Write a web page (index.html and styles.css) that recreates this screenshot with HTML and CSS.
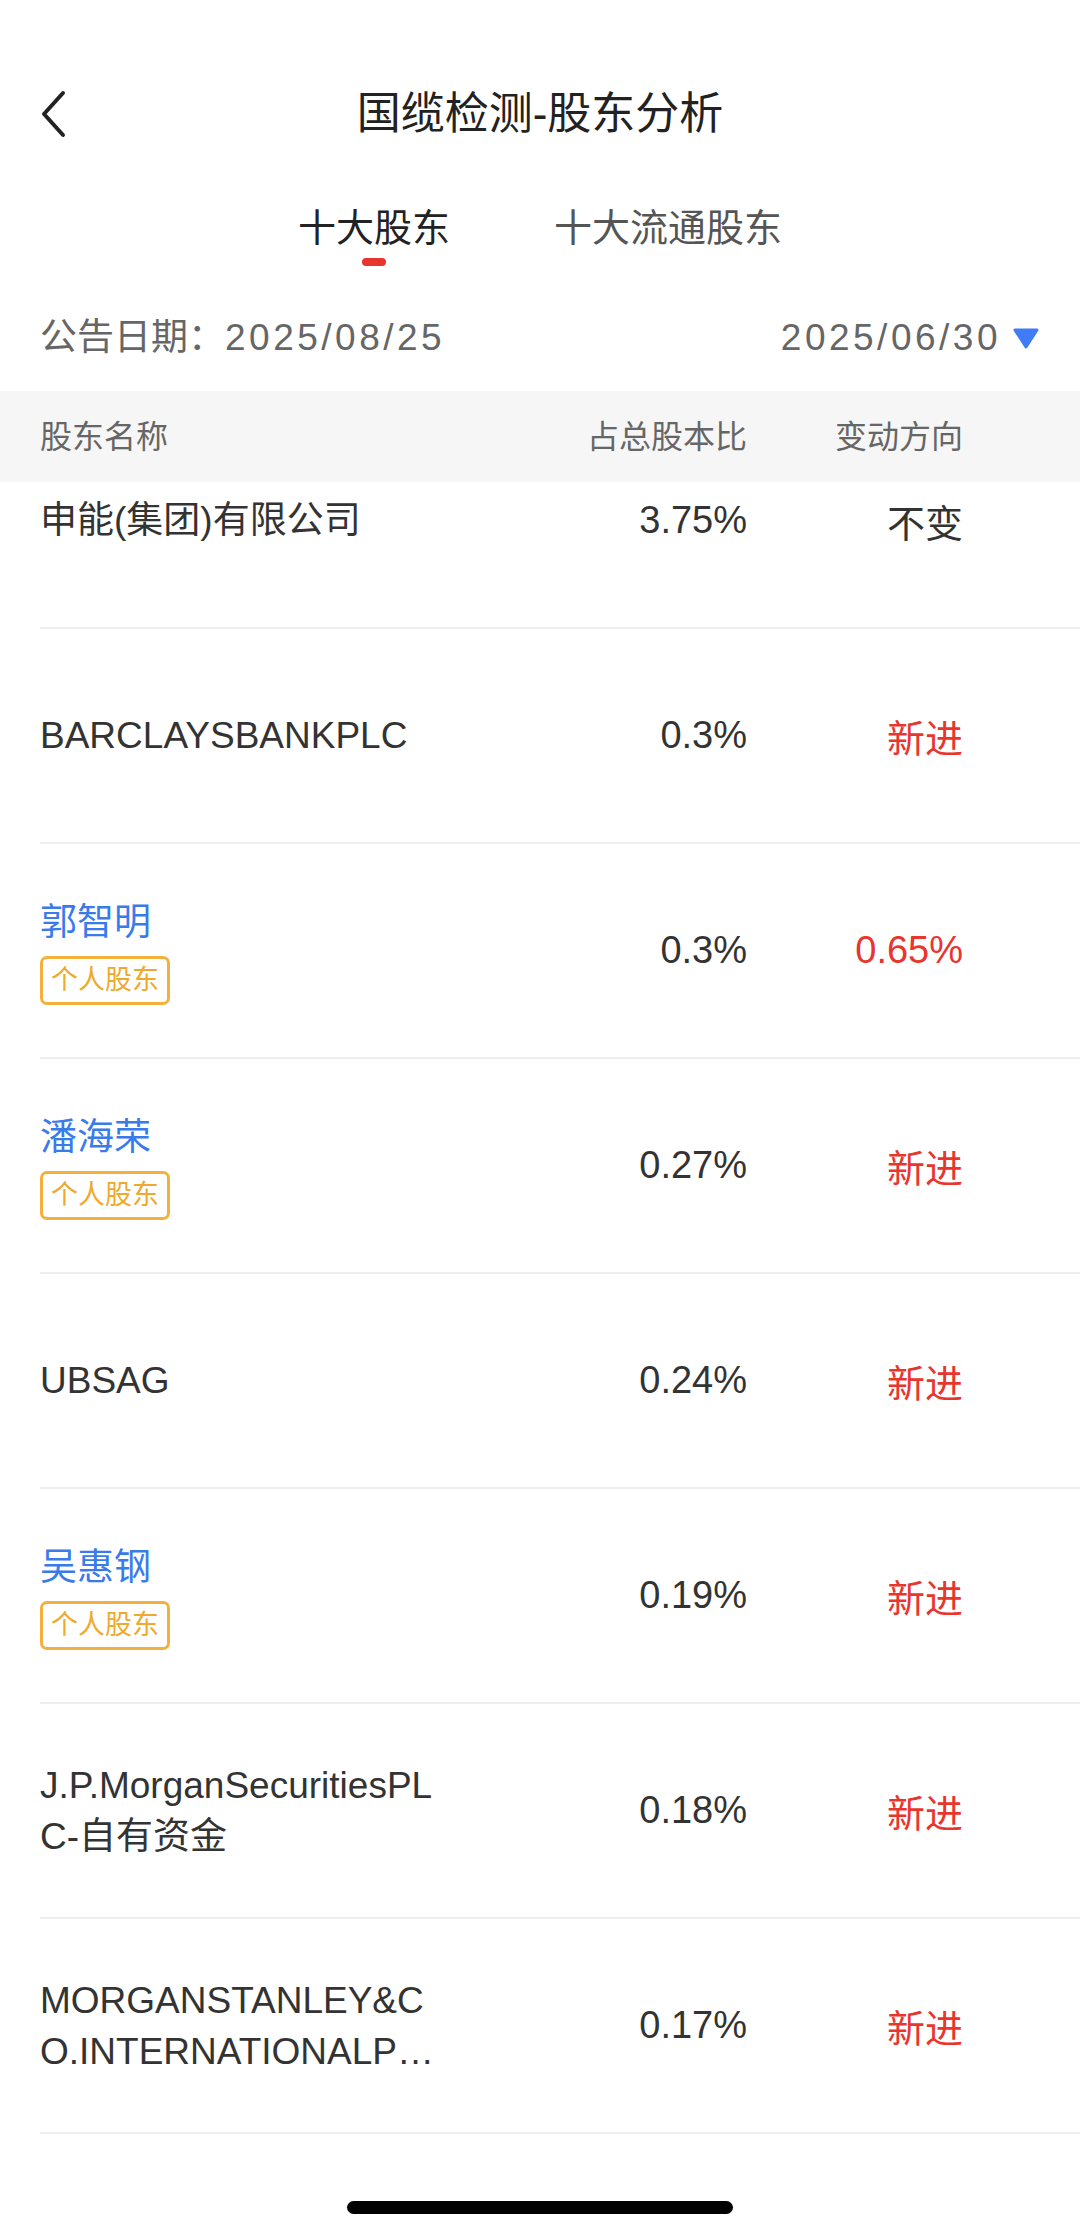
FILE: index.html
```html
<!DOCTYPE html>
<html>
<head>
    <meta charset="utf-8" />
    <title>国缆检测-股东分析</title>
    <link rel="stylesheet" href="styles.css">
</head>
<body>
    <header class="topbar">
        <a class="back">
            <svg width="26" height="50" viewBox="0 0 26 50"><polyline points="22,4 3,25 22,46" fill="none" stroke="#222" stroke-width="4" stroke-linecap="round" stroke-linejoin="round"/></svg>
        </a>
        <h1>国缆检测-股东分析</h1>
        <div></div>
    </header>

    <nav class="tabs">
        <div class="tab active">十大股东<i class="bar"></i></div>
        <div class="tab">十大流通股东</div>
    </nav>

    <div class="dates">
        <span>公告日期：<span class="num">2025/08/25</span></span>
        <span class="period">
            <span class="num">2025/06/30</span>
            <svg width="26" height="21" viewBox="0 0 26 21"><path d="M2 2 H24 L13 19 Z" fill="#3f7cf6" stroke="#3f7cf6" stroke-width="3" stroke-linejoin="round"/></svg>
        </span>
    </div>

    <div class="thead">
        <span>股东名称</span>
        <span class="c">占总股本比</span>
        <span class="c">变动方向</span>
    </div>

    <div class="viewport">
        <div class="list">
            <div class="row">
                <div class="who"><div class="name">申能(集团)有限公司</div></div>
                <div class="c">3.75%</div>
                <div class="c">不变</div>
            </div>
            <div class="row">
                <div class="who"><div class="name">BARCLAYSBANKPLC</div></div>
                <div class="c">0.3%</div>
                <div class="c up">新进</div>
            </div>
            <div class="row">
                <div class="who"><div class="name person">郭智明</div><span class="tag">个人股东</span></div>
                <div class="c">0.3%</div>
                <div class="c up">0.65%</div>
            </div>
            <div class="row">
                <div class="who"><div class="name person">潘海荣</div><span class="tag">个人股东</span></div>
                <div class="c">0.27%</div>
                <div class="c up">新进</div>
            </div>
            <div class="row">
                <div class="who"><div class="name">UBSAG</div></div>
                <div class="c">0.24%</div>
                <div class="c up">新进</div>
            </div>
            <div class="row">
                <div class="who"><div class="name person">吴惠钢</div><span class="tag">个人股东</span></div>
                <div class="c">0.19%</div>
                <div class="c up">新进</div>
            </div>
            <div class="row">
                <div class="who"><div class="name">J.P.MorganSecuritiesPLC-自有资金</div></div>
                <div class="c">0.18%</div>
                <div class="c up">新进</div>
            </div>
            <div class="row">
                <div class="who"><div class="name">MORGANSTANLEY&amp;CO.INTERNATIONALPLC</div></div>
                <div class="c">0.17%</div>
                <div class="c up">新进</div>
            </div>
        </div>
    </div>

    <div class="home"></div>
</body>
</html>
```

FILE: styles.css
```css
* {
    box-sizing: border-box;
}

html, body {
    margin: 0;
    padding: 0;
}

body {
    width: 1080px;
    height: 2237px;
    overflow: hidden;
    background: #ffffff;
    color: #333333;
    font-family: "Liberation Sans", "Noto Sans CJK SC", sans-serif;
}

.topbar {
    display: grid;
    grid-template-columns: 1fr auto 1fr;
    align-items: center;
    height: 100px;
    margin-top: 64px;
}

.back {
    display: flex;
    padding-left: 41px;
}

h1 {
    margin: 0;
    font-size: 44px;
    font-weight: normal;
    line-height: 100px;
    color: #222222;
}

.tabs {
    display: flex;
    justify-content: center;
    align-items: flex-start;
    gap: 104px;
    padding-top: 38px;
}

.tab {
    display: flex;
    flex-direction: column;
    align-items: center;
    font-size: 38px;
    line-height: 52px;
    color: #555555;
}

.tab.active {
    color: #222222;
}

.tab .bar {
    width: 24px;
    height: 8px;
    margin-top: 4px;
    border-radius: 4px;
    background: #e8352e;
}

.dates {
    display: flex;
    justify-content: space-between;
    align-items: center;
    margin-top: 46px;
    padding: 0 41px 0 40px;
    font-size: 37px;
    line-height: 52px;
    color: #666666;
}

.dates .num {
    letter-spacing: 3.5px;
}

.period {
    display: flex;
    align-items: center;
    gap: 12px;
}

.thead {
    display: grid;
    grid-template-columns: 1fr 200px 216px;
    align-items: center;
    height: 91px;
    margin-top: 27px;
    padding: 0 117px 6px 40px;
    background: #f6f6f6;
    font-size: 32px;
    color: #666666;
}

.c {
    text-align: right;
}

.viewport {
    height: 1652px;
    overflow: hidden;
}

/* list is scrolled a bit, first row sits under the header */
.list {
    margin-top: -68px;
}

.row {
    display: grid;
    grid-template-columns: 1fr 200px 216px;
    align-items: center;
    height: 215px;
    margin-left: 40px;
    padding-right: 117px;
    border-bottom: 2px solid #eeeeee;
    font-size: 38px;
    color: #333333;
}

.who {
    display: flex;
    flex-direction: column;
    align-items: flex-start;
    gap: 8px;
}

.name {
    width: 402px;
    font-size: 37px;
    line-height: 51px;
    word-break: break-all;
    display: -webkit-box;
    -webkit-line-clamp: 2;
    -webkit-box-orient: vertical;
    overflow: hidden;
}

.name.person {
    color: #3a7bec;
}

.tag {
    padding: 0 8px;
    border: 3px solid #f3b13b;
    border-radius: 7px;
    font-size: 27px;
    line-height: 43px;
    color: #efa92e;
}

.up {
    color: #e8352e;
}

.home {
    width: 386px;
    height: 13px;
    margin: 67px auto 0;
    border-radius: 7px;
    background: #000000;
}
```
